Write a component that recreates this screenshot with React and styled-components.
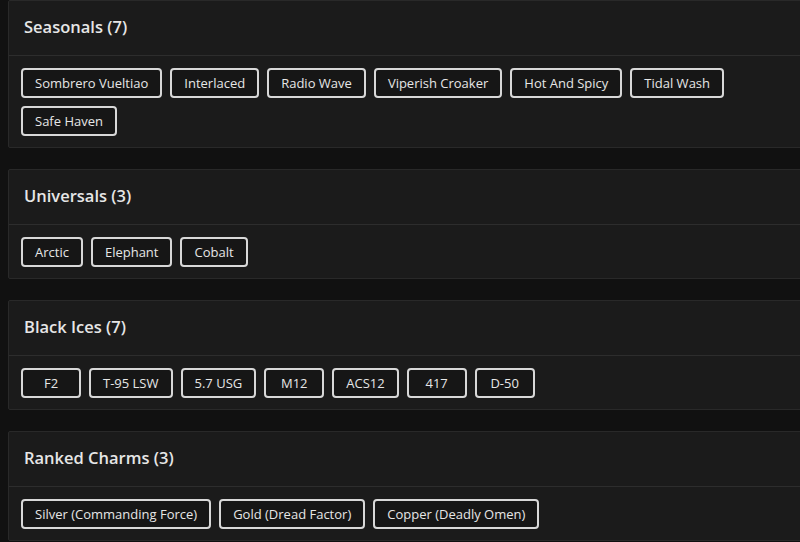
import React from "react";
import styled, { createGlobalStyle } from "styled-components";

const Global = createGlobalStyle`
  html, body { margin: 0; padding: 0; background: #111111; }
  body { padding: 0 0 0 8px; font-family: "Open Sans", "Liberation Sans", sans-serif; color: #e8e8e8; }
`;

const Page = styled.div`
  display: flex;
  flex-direction: column;
  gap: 21px;
  width: 810px;
`;

const Card = styled.section`
  background: #1b1b1b;
  border: 1px solid #292929;
  border-radius: 2px;
`;

const Header = styled.h2`
  box-sizing: border-box;
  margin: 0;
  height: 55px;
  display: flex;
  align-items: center;
  padding: 0 15px 3px;
  font-size: 16.5px;
  font-weight: 600;
  color: #e6e6e6;
  border-bottom: 1px solid #2d2d2d;
`;

const Body = styled.div`
  display: flex;
  flex-wrap: wrap;
  gap: 8px 8px;
  padding: 12px 12px 11px 12px;
`;

const Chip = styled.button`
  box-sizing: border-box;
  height: 30px;
  min-width: 60px;
  padding: 0 12px;
  background: #161616;
  border: 2px solid #d8d8d8;
  border-radius: 4px;
  color: #e6e6e6;
  font-family: inherit;
  font-size: 13px;
  font-weight: 500;
  display: inline-flex;
  align-items: center;
  justify-content: center;
`;

const groups = [
  { title: "Seasonals", items: ["Sombrero Vueltiao", "Interlaced", "Radio Wave", "Viperish Croaker", "Hot And Spicy", "Tidal Wash", "Safe Haven"] },
  { title: "Universals", items: ["Arctic", "Elephant", "Cobalt"] },
  { title: "Black Ices", items: ["F2", "T-95 LSW", "5.7 USG", "M12", "ACS12", "417", "D-50"] },
  { title: "Ranked Charms", items: ["Silver (Commanding Force)", "Gold (Dread Factor)", "Copper (Deadly Omen)"] },
];

export default function App() {
  return (
    <>
      <Global />
      <Page>
        {groups.map((g) => (
          <Card key={g.title}>
            <Header>{g.title} ({g.items.length})</Header>
            <Body>
              {g.items.map((it) => (
                <Chip key={it}>{it}</Chip>
              ))}
            </Body>
          </Card>
        ))}
      </Page>
    </>
  );
}
